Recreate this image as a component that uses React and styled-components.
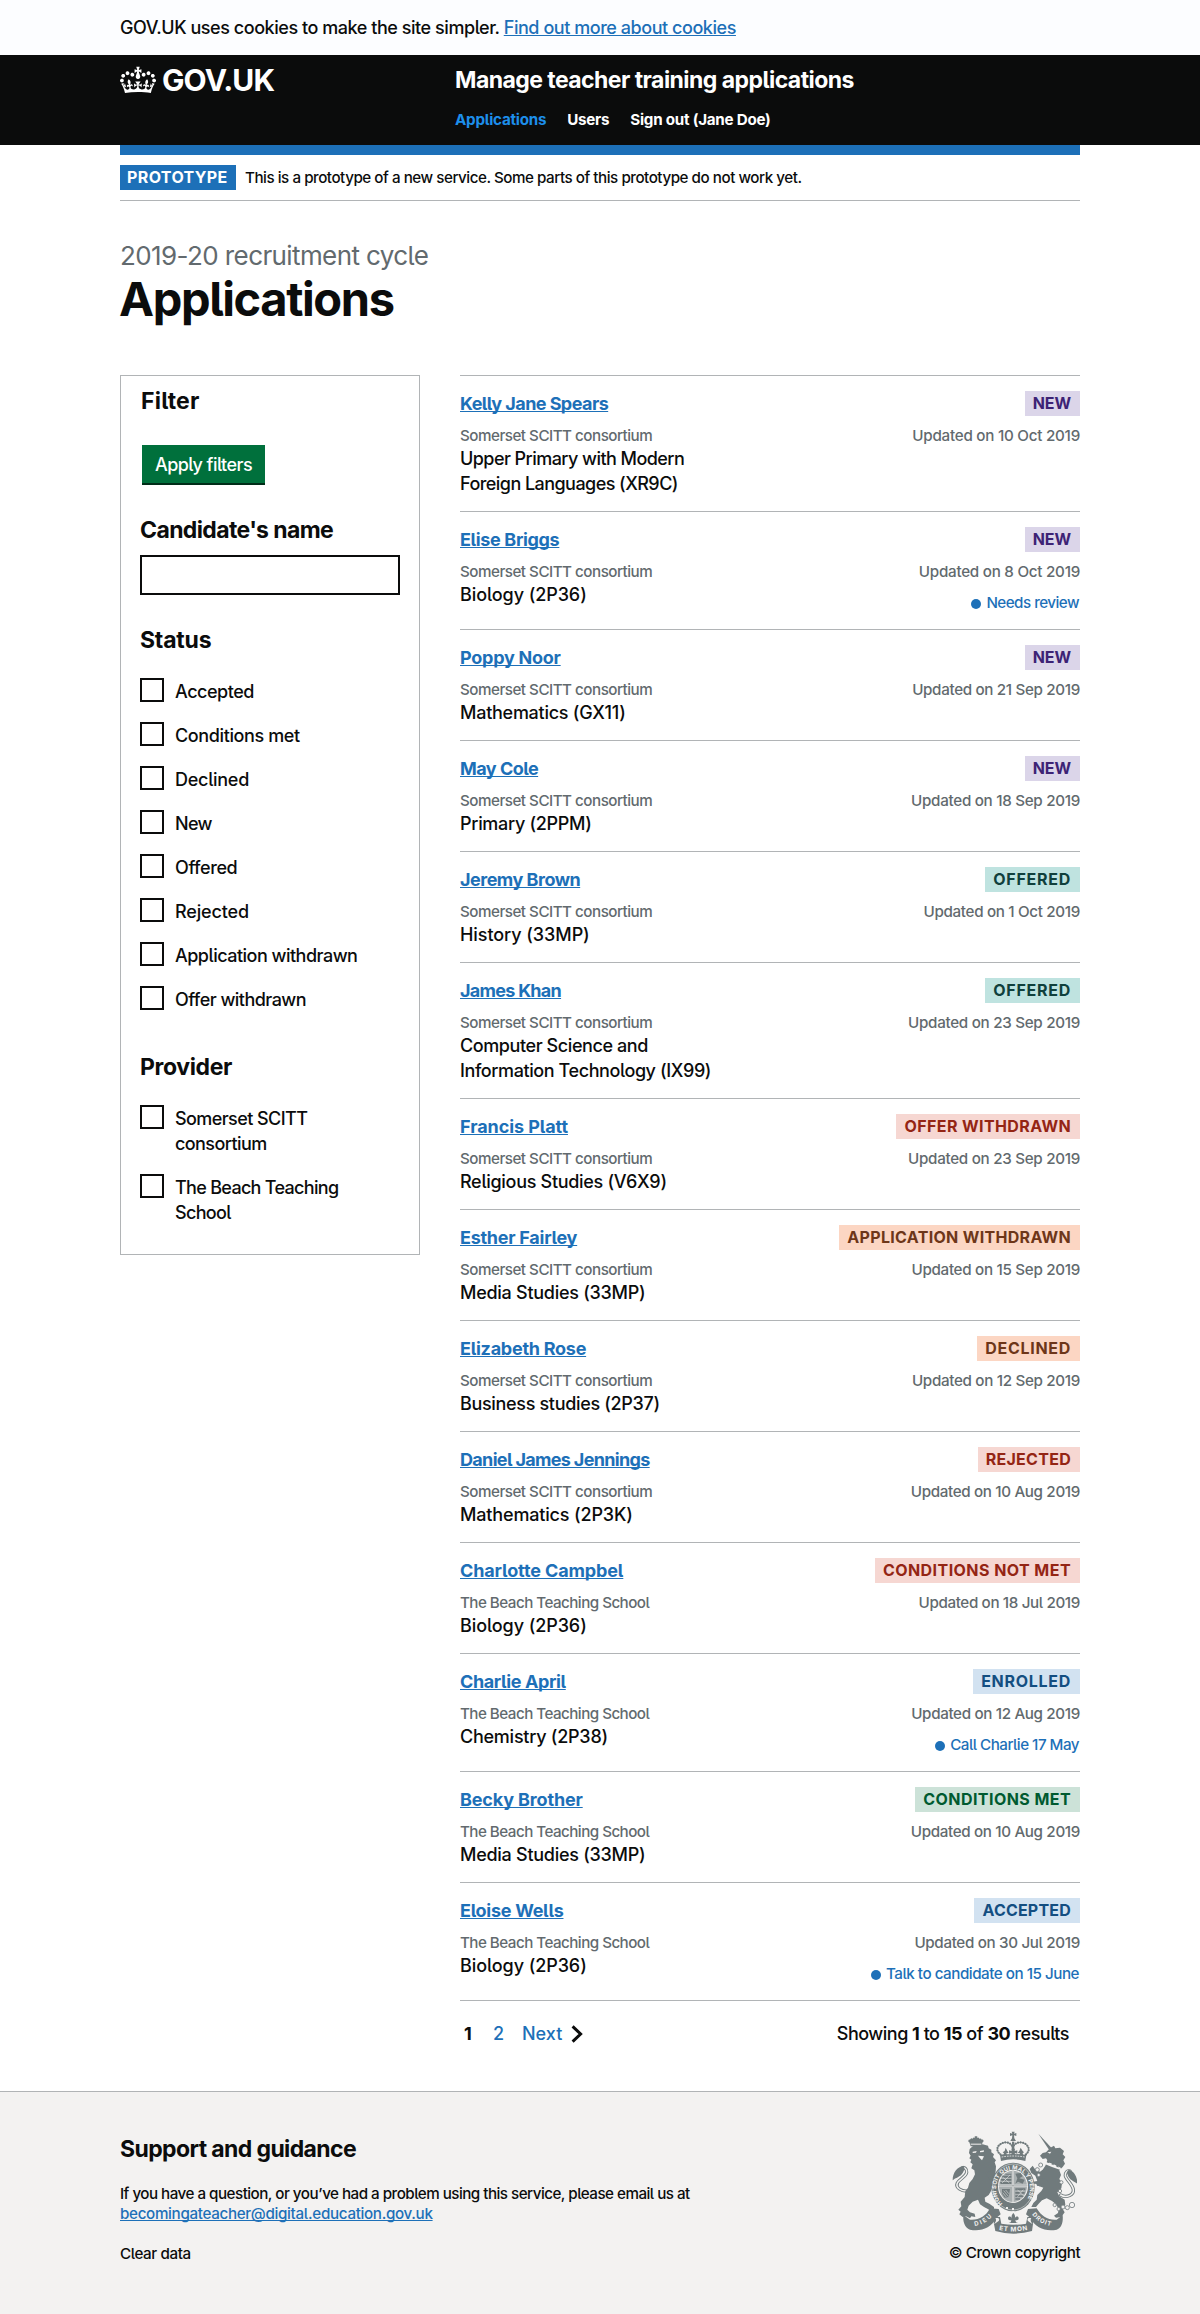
import React from 'react';
import styled, { createGlobalStyle, css } from 'styled-components';

const GlobalStyle = createGlobalStyle`
  *, *::before, *::after { box-sizing: border-box; }
  body {
    margin: 0;
    background: #fff;
    color: #0b0c0c;
    font-family: Inter, "Liberation Sans", sans-serif;
    font-feature-settings: 'cv05';
    font-size: 18px;
    font-weight: 470;
    line-height: 25px;
  }
  h1, h2, h3, p, ul, fieldset { margin: 0; padding: 0; border: 0; }
  ul { list-style: none; }
`;

const small = css`
  font-size: 15.2px;
  line-height: 20px;
`;

const heading = css`
  font-size: 23px;
  font-weight: 720;
  line-height: 30px;
`;

/* Text run with its own letter spacing, in px */
const Run = styled.span`
  letter-spacing: ${(p) => p.$t ?? -0.4}px;
`;

const Container = styled.div`
  width: 960px;
  margin: 0 auto;
`;

const Link = styled.a`
  color: #1d70b8;
  text-decoration: underline;
  text-decoration-thickness: 1px;
  text-underline-offset: 1px;
  text-decoration-skip-ink: none;
  letter-spacing: ${(p) => p.$t ?? -0.4}px;
`;

/* Cookie message */
const CookieBar = styled.div`
  height: 55px;
  padding: 15px 0;
  background: #fcfdff;
  white-space: pre;
`;

/* Header */
const HeaderBar = styled.header`
  height: 90px;
  background: #0b0c0c;
  color: #fff;
`;

const HeaderInner = styled(Container)`
  display: grid;
  grid-template-columns: 335px 1fr;
  padding-top: 10px;
`;

const Logo = styled.a`
  display: flex;
  align-items: flex-start;
  gap: 6px;
  height: 30px;
`;

const LogoText = styled.span`
  font-size: 30px;
  font-weight: 700;
  line-height: 30px;
  letter-spacing: -0.9px;
`;

const ServiceName = styled.div`
  ${heading}
  letter-spacing: -0.55px;
`;

const Nav = styled.nav`
  display: flex;
  margin-top: 15px;
`;

const NavLink = styled.a`
  ${small}
  font-weight: 720;
  letter-spacing: -0.25px;
  color: ${(p) => (p.$active ? '#1d8feb' : '#fff')};
  margin-right: ${(p) => p.$gap ?? 0}px;
`;

/* Phase banner */
const BlueBar = styled.div`
  height: 10px;
  background: #1d70b8;
`;

const PhaseBanner = styled.div`
  display: flex;
  align-items: center;
  height: 46px;
  border-bottom: 1px solid #b1b4b6;
`;

const PhaseTag = styled.strong`
  width: 116px;
  height: 25px;
  padding: 2px 0 0 7px;
  margin-right: 9px;
  background: #1d70b8;
  color: #fff;
  font-size: 16px;
  font-weight: 720;
  line-height: 20px;
  letter-spacing: 0.38px;
`;

const PhaseText = styled.span`
  ${small}
  letter-spacing: -0.47px;
`;

/* Page heading */
const Caption = styled.span`
  display: block;
  margin-top: 40px;
  color: #626a6e;
  font-size: 26px;
  font-weight: 420;
  line-height: 30px;
  letter-spacing: -0.6px;
`;

const Title = styled.h1`
  margin: 3px 0 51px;
  margin-left: -1px;
  font-size: 47px;
  font-weight: 700;
  line-height: 50px;
  letter-spacing: -1.4px;
`;

const Columns = styled.div`
  display: grid;
  grid-template-columns: 300px 620px;
  gap: 40px;
  align-items: start;
`;

/* Filter panel */
const FilterPanel = styled.aside`
  height: 880px;
  padding: 10px 19px 0;
  border: 1px solid #b1b4b6;
`;

const PanelTitle = styled.h2`
  ${heading}
  letter-spacing: 0.2px;
  margin: 0 0 29px 1px;
`;

const ApplyButton = styled.button`
  display: block;
  width: 123px;
  height: 38px;
  margin: 0 0 32px 2px;
  padding: 1px 0 0;
  border: 0;
  background: #00703c;
  box-shadow: 0 2px 0 #002d18;
  color: #fff;
  font: inherit;
  font-feature-settings: inherit;
  letter-spacing: -0.54px;
`;

const GroupTitle = styled.h3`
  ${heading}
  letter-spacing: ${(p) => p.$t}px;
`;

const NameInput = styled.input`
  display: block;
  width: 260px;
  height: 40px;
  margin: 10px 0 30px;
  border: 2px solid #0b0c0c;
  border-radius: 0;
  background: #fff;
`;

const Options = styled.ul`
  margin: 23px 0 22px;
`;

const Option = styled.li`
  display: grid;
  grid-template-columns: 24px 1fr;
  gap: 11px;
  padding-bottom: 18px;
`;

const Checkbox = styled.span`
  width: 24px;
  height: 24px;
  border: 2px solid #0b0c0c;
`;

const OptionLabel = styled.label`
  max-width: 190px;
  padding-top: 1px;
`;

/* Results */
const Results = styled.ul`
  border-bottom: 1px solid #b1b4b6;
`;

const Card = styled.li`
  display: flex;
  justify-content: space-between;
  padding: 15px 0;
  border-top: 1px solid #b1b4b6;
`;

const CardMain = styled.div`
  width: 266px;
`;

const CardSide = styled.div`
  display: flex;
  flex-direction: column;
  align-items: flex-end;
`;

const Name = styled.h3`
  margin-bottom: 10px;
  font-size: 18px;
  line-height: 25px;
  font-weight: 740;
  white-space: nowrap;
`;

const Meta = styled.p`
  ${small}
  color: #626a6e;
  white-space: nowrap;
`;

const Tag = styled.strong`
  height: 25px;
  margin-bottom: 10px;
  padding: 2px 9px 0 8px;
  font-size: 16px;
  font-weight: 700;
  line-height: 20px;
  white-space: nowrap;
  letter-spacing: ${(p) => p.$t}px;
  color: ${(p) => p.$c[0]};
  background: ${(p) => p.$c[1]};
`;

const Note = styled.p`
  ${small}
  display: flex;
  align-items: center;
  gap: 5px;
  height: 22px;
  margin-top: 11px;
  margin-bottom: -1px;
  padding-bottom: 2px;
  padding-right: 1px;
  color: #1d70b8;
`;

const Dot = styled.i`
  width: 10px;
  height: 10px;
  margin-top: 1px;
  border-radius: 50%;
  background: #1d70b8;
`;

const Pagination = styled.div`
  display: flex;
  justify-content: space-between;
  padding: 20px 11px 0 4px;
`;

const Pages = styled.div`
  display: flex;
  align-items: center;
`;

const Page = styled.a`
  color: ${(p) => (p.$current ? '#0b0c0c' : '#1d70b8')};
  font-weight: ${(p) => (p.$current ? 740 : 470)};
  width: ${(p) => p.$w}px;
`;

const Showing = styled.p`
  letter-spacing: -0.5px;
  b { font-weight: 740; }
`;

/* Footer */
const FooterBar = styled.footer`
  height: 223px;
  margin-top: 45px;
  border-top: 1px solid #b1b4b6;
  background: #f3f2f1;
`;

const FooterInner = styled(Container)`
  display: flex;
  justify-content: space-between;
`;

const FooterText = styled.div`
  ${small}
  padding-top: 42px;
`;

const FooterTitle = styled.h2`
  ${heading}
  margin-bottom: 20px;
  letter-spacing: -0.61px;
`;

const FooterPara = styled.p`
  margin-bottom: 20px;
`;

const Crest = styled.div`
  ${small}
  display: flex;
  flex-direction: column;
  align-items: center;
  gap: 9px;
  padding-top: 39px;
  width: 131px;
  white-space: nowrap;
`;

const OPTIONS_STATUS = [
  ['Accepted', -0.47], ['Conditions met', -0.38], ['Declined', -0.27], ['New', -0.64],
  ['Offered', -0.4], ['Rejected', -0.14], ['Application withdrawn', -0.51], ['Offer withdrawn', -0.53],
];
const OPTIONS_PROVIDER = [['Somerset SCITT consortium', -0.58], ['The Beach Teaching School', -0.69]];

const purple = ['#3d2375', '#dbd5e9'];
const turquoise = ['#10403c', '#bfe3e0'];
const red = ['#942514', '#f6d7d2'];
const orange = ['#6e3619', '#fcd6c3'];
const blue = ['#144e81', '#d2e2f1'];
const green = ['#005a30', '#cce2d8'];

const SOMERSET = ['Somerset SCITT consortium', -0.5];
const BEACH = ['The Beach Teaching School', -0.54];

const APPLICATIONS = [
  { name: ['Kelly Jane Spears', -0.56], org: SOMERSET, course: ['Upper Primary with Modern Foreign Languages (XR9C)', -0.55], tag: ['NEW', -0.05, purple], date: ['10 Oct 2019', -0.25] },
  { name: ['Elise Briggs', -0.35], org: SOMERSET, course: ['Biology (2P36)', -0.08], tag: ['NEW', -0.05, purple], date: ['8 Oct 2019', -0.26], note: ['Needs review', -0.53] },
  { name: ['Poppy Noor', -0.25], org: SOMERSET, course: ['Mathematics (GX11)', -0.26], tag: ['NEW', -0.05, purple], date: ['21 Sep 2019', -0.34] },
  { name: ['May Cole', -0.52], org: SOMERSET, course: ['Primary (2PPM)', -0.3], tag: ['NEW', -0.05, purple], date: ['18 Sep 2019', -0.3] },
  { name: ['Jeremy Brown', -0.5], org: SOMERSET, course: ['History (33MP)', -0.07], tag: ['OFFERED', 0.74, turquoise], date: ['1 Oct 2019', -0.33] },
  { name: ['James Khan', -0.72], org: SOMERSET, course: ['Computer Science and Information Technology (IX99)', -0.41], tag: ['OFFERED', 0.74, turquoise], date: ['23 Sep 2019', -0.3] },
  { name: ['Francis Platt', -0.08], org: SOMERSET, course: ['Religious Studies (V6X9)', -0.3], tag: ['OFFER WITHDRAWN', 0.4, red], date: ['23 Sep 2019', -0.3] },
  { name: ['Esther Fairley', -0.26], org: SOMERSET, course: ['Media Studies (33MP)', -0.27], tag: ['APPLICATION WITHDRAWN', 0.32, orange], date: ['15 Sep 2019', -0.31] },
  { name: ['Elizabeth Rose', -0.26], org: SOMERSET, course: ['Business studies (2P37)', -0.33], tag: ['DECLINED', 0.71, orange], date: ['12 Sep 2019', -0.33] },
  { name: ['Daniel James Jennings', -0.67], org: SOMERSET, course: ['Mathematics (2P3K)', -0.16], tag: ['REJECTED', 0.28, red], date: ['10 Aug 2019', -0.35] },
  { name: ['Charlotte Campbel', -0.12], org: BEACH, course: ['Biology (2P36)', -0.08], tag: ['CONDITIONS NOT MET', 0.44, red], date: ['18 Jul 2019', -0.37] },
  { name: ['Charlie April', -0.38], org: BEACH, course: ['Chemistry (2P38)', -0.25], tag: ['ENROLLED', 0.71, blue], date: ['12 Aug 2019', -0.35], note: ['Call Charlie 17 May', -0.52] },
  { name: ['Becky Brother', -0.15], org: BEACH, course: ['Media Studies (33MP)', -0.27], tag: ['CONDITIONS MET', 0.43, green], date: ['10 Aug 2019', -0.35] },
  { name: ['Eloise Wells', -0.28], org: BEACH, course: ['Biology (2P36)', -0.08], tag: ['ACCEPTED', 0.2, blue], date: ['30 Jul 2019', -0.34], note: ['Talk to candidate on 15 June', -0.48] },
];

const CrownIcon = () => (
  <svg width="36" height="30" viewBox="0 0 132 97" aria-hidden="true">
    <path fill="currentColor" fillRule="evenodd" d="M25 30.2c3.5 1.5 7.7-.2 9.1-3.7 1.5-3.6-.2-7.8-3.9-9.2-3.6-1.4-7.6.3-9.1 3.9-1.4 3.5.3 7.5 3.9 9zM9 39.5c3.6 1.5 7.8-.2 9.2-3.7 1.5-3.6-.2-7.8-3.9-9.1-3.6-1.5-7.6.2-9.1 3.8-1.4 3.5.3 7.5 3.8 9zM4.4 57.2c3.5 1.5 7.7-.2 9.1-3.8 1.5-3.6-.2-7.7-3.9-9.1-3.5-1.5-7.6.3-9.1 3.8-1.4 3.5.3 7.6 3.9 9.1zm38.3-21.4c3.5 1.5 7.7-.2 9.1-3.8 1.5-3.6-.2-7.7-3.9-9.1-3.6-1.5-7.6.3-9.1 3.8-1.3 3.6.4 7.7 3.9 9.1zm64.4-5.6c-3.6 1.5-7.8-.2-9.1-3.7-1.5-3.6.2-7.8 3.8-9.2 3.6-1.4 7.7.3 9.2 3.9 1.3 3.5-.4 7.5-3.9 9zm15.9 9.3c-3.6 1.5-7.7-.2-9.1-3.7-1.5-3.6.2-7.8 3.7-9.1 3.6-1.5 7.7.2 9.2 3.8 1.5 3.5-.3 7.5-3.8 9zm4.7 17.7c-3.6 1.5-7.8-.2-9.2-3.8-1.5-3.6.2-7.7 3.9-9.1 3.6-1.5 7.7.3 9.2 3.8 1.3 3.5-.4 7.6-3.9 9.1zM89.3 35.8c-3.6 1.5-7.8-.2-9.2-3.8-1.4-3.6.2-7.7 3.9-9.1 3.6-1.5 7.7.3 9.2 3.8 1.4 3.6-.3 7.7-3.9 9.1zM69.7 17.7l8.9 4.7V9.3l-8.9 2.8c-.2-.3-.5-.6-.9-.9L72.4 0H59.6l3.5 11.2c-.3.3-.6.5-.9.9l-8.8-2.8v13.1l8.8-4.7c.3.3.6.7.9.9l-5 15.4v.1c-.2.8-.4 1.6-.4 2.4 0 4.1 3.1 7.5 7 8.1h.2c.3 0 .7.1 1 .1.4 0 .7 0 1-.1h.2c4-.6 7.1-4.1 7.1-8.1 0-.8-.1-1.7-.4-2.4V34l-5.1-15.4c.4-.2.7-.6 1-.9zM66 92.8c16.9 0 32.8 1.1 47.1 3.2 4-16.9 8.9-26.7 14-33.5l-9.6-3.4c1 4.9 1.1 7.2 0 10.2-1.5-1.4-3-4.3-4.2-8.7L108.6 76c2.8-2 5-3.2 7.5-3.3-4.4 9.4-10 11.9-13.6 11.2-4.3-.8-6.3-4.6-5.6-7.9 1-4.7 5.7-5.9 8-.5 4.3-8.7-3-11.4-7.6-8.8 7.1-7.2 7.9-13.5 2.1-21.1-8 6.1-8.1 12.3-4.5 20.8-4.7-5.4-12.1-2.5-9.5 6.2 3.4-5.2 7.9-2 7.2 3.1-.6 4.3-6.4 7.8-13.5 7.2-10.3-.9-10.9-8-11.2-13.8 2.5-.5 7.1 1.8 11 7.3L80.2 60c-4.1 4.4-8 5.3-12.3 5.4 1.4-4.4 8-11.6 8-11.6H55.5s6.4 7.2 7.9 11.6c-4.2-.1-8-1-12.3-5.4l1.4 16.4c3.9-5.5 8.5-7.7 10.9-7.3-.3 5.8-.9 12.8-11.1 13.8-7.2.6-12.9-2.9-13.5-7.2-.7-5 3.8-8.3 7.1-3.1 2.7-8.7-4.6-11.6-9.4-6.2 3.7-8.5 3.6-14.7-4.6-20.8-5.8 7.6-5 13.9 2.2 21.1-4.7-2.6-11.9.1-7.7 8.8 2.3-5.5 7.1-4.2 8.1.5.7 3.3-1.3 7.1-5.7 7.9-3.5.7-9-1.8-13.5-11.2 2.5.1 4.7 1.3 7.5 3.3l-4.7-15.4c-1.2 4.4-2.7 7.2-4.3 8.7-1.1-3-.9-5.3 0-10.2l-9.5 3.4c5 6.9 9.9 16.7 14 33.5 14.8-2.1 30.8-3.2 47.7-3.2z" />
  </svg>
);

const ChevronIcon = () => (
  <svg width="12" height="18" viewBox="0 0 12 18" aria-hidden="true">
    <path d="M1.6 1.4L9.6 9L1.6 16.6" fill="none" stroke="#0b0c0c" strokeWidth="3" />
  </svg>
);

const INK = '#707a7c';
const PAPER = '#f3f2f1';

const RoyalArms = () => (
  <svg width="125" height="103" viewBox="50 34 375 309" aria-hidden="true">
    {/* tails */}
    <g fill="none" strokeLinecap="round">
      <path d="M98 214C78 216 60 204 66 190C72 178 92 172 94 158C95 148 88 142 80 145" stroke={INK} strokeWidth="10" />
      <path d="M98 214C78 216 60 204 66 190C72 178 92 172 94 158C95 148 88 142 80 145" stroke={PAPER} strokeWidth="4.5" />
      <path d="M376 226C394 236 416 226 414 210C412 194 392 180 390 168C389 158 396 152 404 154" stroke={INK} strokeWidth="10" />
      <path d="M376 226C394 236 416 226 414 210C412 194 392 180 390 168C389 158 396 152 404 154" stroke={PAPER} strokeWidth="4.5" />
    </g>
    <g fill={INK}>
      <path d="M84 138C66 142 52 158 52 182C60 174 76 172 82 160L88 148Z" />
      <path d="M400 150C416 154 426 170 426 192C418 186 402 180 398 168L394 158Z" />

      {/* lion with its crown */}
      <path d="M102 68A4 4 0 0 1 104 60A5 5 0 0 1 112 57A5 5 0 0 1 119 54L118 50H126L125 54A5 5 0 0 1 132 57A5 5 0 0 1 139 60A4 4 0 0 1 142 68L138 80H106Z" />
      <path d="M103 88L112 80L125 76L142 74L158 78L160 86L168 90L168 98L176 104L173 112L182 122L178 128L182 140L181 154L178 168L174 180L180 196L200 206L196 212L204 216L196 222L184 220L170 204L166 216L160 226L148 234L150 246L162 252L176 262L176 270L168 267L166 273L156 267L146 262L134 254L128 240L112 246L100 258L96 270L104 278L118 282L120 292L108 290L104 296L92 290L82 292L72 284L76 276L69 270L78 260L76 246L88 232L90 214L98 204L102 190L112 178L119 164L117 152L108 146L112 134L105 128L108 120L102 116L106 108L101 100Z" />
      <path d="M150 160L170 152L184 166L178 178L190 186L200 190L196 198L184 196L168 186Z" />

      {/* unicorn */}
      <path d="M309 42L348 84L341 90Z" />
      <path d="M345 84L356 78L360 86L374 84L386 94L382 104L390 112L384 122L389 132L382 142L372 152L377 166L372 178L380 190L378 206L366 218L372 230L388 240L390 256L382 268L388 278L378 292L362 294L356 288L368 280L370 268L362 254L350 244L334 236L320 242L310 252L302 262L288 262L294 250L304 240L306 226L318 214L324 204L312 200L300 192L290 194L292 186L306 184L300 168L288 160L283 148L292 138L300 150L314 156L322 150L330 138L336 122L332 116L322 118L314 108L322 100L332 98Z" />
      <path d="M304 172L316 178L330 176L340 188L322 192L314 200L304 198L310 188Z" />

      {/* ribbon */}
      <path d="M84 286L104 300C130 302 152 290 164 266L190 268L196 284L182 296C168 326 136 336 104 330C88 324 82 306 84 286Z" />
      <path d="M382 286L364 300C338 302 318 290 304 266L278 268L272 284L286 296C300 326 332 336 364 330C380 324 384 306 382 286Z" />
      <path d="M172 292H194L198 312Q234 318 272 312L276 292H296L290 334Q234 350 180 334Z" />
    </g>

    {/* face, mane and ribbon details */}
    <g fill={PAPER}>
      <path d="M112 96L124 94L122 99L112 100ZM134 94L146 92L145 97L134 98ZM128 108L146 110L140 122L134 116Z" />
      <path d="M336 98L348 96L344 102ZM326 124L352 132L376 144L378 152L350 142L326 132Z" />
      <path d="M106 72H138V75H106Z" />
      <path d="M180 296C190 292 194 298 190 304L176 314C182 306 184 300 180 296ZM288 296C278 292 274 298 278 304L292 314C286 306 284 300 288 296Z" />
    </g>
    <g fill={INK}>
      <path d="M334 128L338 122L342 131ZM348 134L352 127L356 137ZM362 140L366 133L370 144Z" />
    </g>

    {/* chain */}
    <g fill={PAPER} stroke={INK} strokeWidth="2.4">
      <circle cx="378" cy="188" r="5" /><circle cx="374" cy="214" r="5" />
      <circle cx="358" cy="256" r="5" /><circle cx="370" cy="268" r="5" />
      <circle cx="383" cy="262" r="6" /><circle cx="396" cy="264" r="6" /><circle cx="410" cy="256" r="8" />
      <circle cx="316" cy="136" r="6" /><circle cx="306" cy="150" r="6" /><circle cx="310" cy="166" r="5" />
    </g>

    {/* garter and shield */}
    <ellipse cx="233" cy="202" rx="65" ry="73" fill={INK} />
    <ellipse cx="233" cy="202" rx="61" ry="69" fill="none" stroke={PAPER} strokeWidth="1.5" />
    <ellipse cx="233" cy="200" rx="45" ry="50" fill={PAPER} />
    <ellipse cx="233" cy="200" rx="42" ry="47" fill="#a9afb0" />
    <g fill={INK}>
      <path d="M198 168H228V174H202ZM196 178H228V183H198ZM194 187H228V193H196ZM210 162H228V165H210Z" />
      <path d="M240 162L256 160L262 170L252 176L268 180L262 192L248 186L240 192L246 176Z" />
      <path d="M200 208H224L220 232L208 234L200 222Z" />
      <path d="M240 206H270V212H240ZM240 217H268V222H240ZM240 227H264V232H240ZM240 236H254V240H240Z" />
    </g>
    <path d="M233 152V248M190 198H276" stroke={PAPER} strokeWidth="5" />
    <path d="M233 152V248M190 198H276" stroke={INK} strokeWidth="1.5" />
    <path d="M205 213L219 230M211 211L220 222M202 219L213 232" stroke={PAPER} strokeWidth="1.5" />
    <path d="M202 172L222 190M224 166L200 190M246 210L266 230M264 210L246 232" stroke={PAPER} strokeWidth="1.5" />
    <path id="garter" d="M202 252A51 57 0 1 1 266 250" fill="none" />
    <text fill={PAPER} fontSize="17" fontWeight="700" fontFamily="Inter, sans-serif">
      <textPath href="#garter" textLength="252">HONI SOIT QUI MAL Y PENSE</textPath>
    </text>
    <path d="M212 262h6v6h-6zM230 265h6v6h-6z" fill={PAPER} />
    <path d="M218 283L234 274L250 283V312H218Z" fill={PAPER} />

    {/* fleur-de-lis */}
    <path d="M234 280C240 286 240 292 238 297C242 288 250 290 250 296C250 302 244 303 240 301L242 308L248 310H220L226 308L228 301C224 303 218 302 218 296C218 290 226 288 230 297C228 292 228 286 234 280Z" fill={INK} />

    {/* central crown */}
    <g fill="none" stroke={INK}>
      <path d="M202 108C186 100 182 88 190 78C200 66 226 62 232 84C240 62 268 66 276 78C284 88 280 100 266 108" strokeWidth="2" />
      <path d="M202 108C186 100 182 88 190 78C200 66 226 62 232 84C240 62 268 66 276 78C284 88 280 100 266 108" strokeWidth="6.5" strokeLinecap="round" strokeDasharray="0.1 7.4" />
    </g>
    <g fill={INK}>
      <path d="M229 36H238L236 42L243 40V49L236 47L237 56L242 64H225L230 56L231 47L224 49V40L231 42Z" />
      <path d="M230 66H237V92H230Z" />
      <path d="M228 86L233 91L239 86L238 94L246 92V102L238 100L242 110H225L229 100L221 102V92L229 94Z" />
      <path d="M211 84L216 94L220 100L213 101L216 110H202L206 101L202 98L208 94ZM256 84L262 94L266 98L262 101L265 110H251L254 101L247 100L252 94Z" />
      <path d="M194 106Q233 100 273 106L270 124Q233 114 197 124Z" />
    </g>
    <path d="M199 112Q233 106 268 112" fill="none" stroke={PAPER} strokeWidth="2.5" strokeDasharray="5 3" />

    {/* motto */}
    <path id="motto-left" d="M118 319Q152 314 176 284" fill="none" />
    <path id="motto-mid" d="M191 331Q234 340 280 330" fill="none" />
    <path id="motto-right" d="M290 284Q312 314 352 320" fill="none" />
    <g fill={PAPER} fontWeight="700" fontFamily="Inter, sans-serif">
      <text fontSize="18"><textPath href="#motto-left" textLength="60">DIEU</textPath></text>
      <text fontSize="19"><textPath href="#motto-mid" textLength="86">ET MON</textPath></text>
      <text fontSize="18"><textPath href="#motto-right" textLength="68">DROIT</textPath></text>
    </g>
  </svg>
);

const OptionList = ({ items }) => (
  <Options>
    {items.map(([label, t]) => (
      <Option key={label}>
        <Checkbox />
        <OptionLabel><Run $t={t}>{label}</Run></OptionLabel>
      </Option>
    ))}
  </Options>
);

const ApplicationCard = ({ item }) => (
  <Card>
    <CardMain>
      <Name><Link href="#" $t={item.name[1]}>{item.name[0]}</Link></Name>
      <Meta><Run $t={item.org[1]}>{item.org[0]}</Run></Meta>
      <p><Run $t={item.course[1]}>{item.course[0]}</Run></p>
    </CardMain>
    <CardSide>
      <Tag $t={item.tag[1]} $c={item.tag[2]}>{item.tag[0]}</Tag>
      <Meta><Run $t={item.date[1]}>{`Updated on ${item.date[0]}`}</Run></Meta>
      {item.note && <Note><Dot /><Run $t={item.note[1]}>{item.note[0]}</Run></Note>}
    </CardSide>
  </Card>
);

export default function App() {
  return (
    <>
      <GlobalStyle />
      <CookieBar>
        <Container>
          <Run $t={-0.45}>GOV.UK uses cookies to make the site simpler. </Run>
          <Link href="#" $t={-0.45}>Find out more about cookies</Link>
        </Container>
      </CookieBar>
      <HeaderBar>
        <HeaderInner>
          <Logo>
            <CrownIcon />
            <LogoText>GOV.UK</LogoText>
          </Logo>
          <div>
            <ServiceName>Manage teacher training applications</ServiceName>
            <Nav>
              <NavLink $active $gap={21}>Applications</NavLink>
              <NavLink $gap={21}>Users</NavLink>
              <NavLink>Sign out (Jane Doe)</NavLink>
            </Nav>
          </div>
        </HeaderInner>
      </HeaderBar>
      <Container>
        <BlueBar />
        <PhaseBanner>
          <PhaseTag>PROTOTYPE</PhaseTag>
          <PhaseText>This is a prototype of a new service. Some parts of this prototype do not work yet.</PhaseText>
        </PhaseBanner>
        <Caption>2019-20 recruitment cycle</Caption>
        <Title>Applications</Title>
        <Columns>
          <FilterPanel>
            <PanelTitle>Filter</PanelTitle>
            <ApplyButton>Apply filters</ApplyButton>
            <GroupTitle $t={-0.62}>Candidate's name</GroupTitle>
            <NameInput />
            <GroupTitle $t={-0.2}>Status</GroupTitle>
            <OptionList items={OPTIONS_STATUS} />
            <GroupTitle $t={-0.37}>Provider</GroupTitle>
            <OptionList items={OPTIONS_PROVIDER} />
          </FilterPanel>
          <div>
            <Results>
              {APPLICATIONS.map((item) => <ApplicationCard key={item.name[0]} item={item} />)}
            </Results>
            <Pagination>
              <Pages>
                <Page $current $w={29}>1</Page>
                <Page $w={29}>2</Page>
                <Page $w={49}>Next</Page>
                <ChevronIcon />
              </Pages>
              <Showing>Showing <b>1</b> to <b>15</b> of <b>30</b> results</Showing>
            </Pagination>
          </div>
        </Columns>
      </Container>
      <FooterBar>
        <FooterInner>
          <FooterText>
            <FooterTitle>Support and guidance</FooterTitle>
            <FooterPara>
              <Run $t={-0.52}>If you have a question, or you’ve had a problem using this service, please email us at</Run>
              <br />
              <Link href="#" $t={-0.33}>becomingateacher@digital.education.gov.uk</Link>
            </FooterPara>
            <FooterPara><Run $t={-0.4}>Clear data</Run></FooterPara>
          </FooterText>
          <Crest>
            <RoyalArms />
            <Run $t={-0.43}>© Crown copyright</Run>
          </Crest>
        </FooterInner>
      </FooterBar>
    </>
  );
}
